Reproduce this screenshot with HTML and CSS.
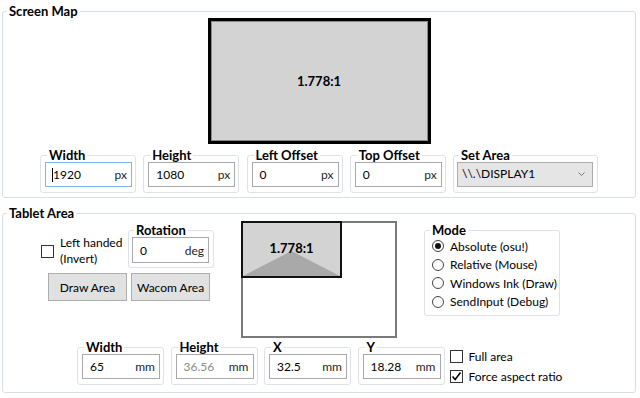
FILE: index.html
```html
<!DOCTYPE html>
<html lang="en">
<head>
    <meta charset="UTF-8">
    <meta name="viewport" content="width=device-width, initial-scale=1.0">
    <title>Area Settings</title>
    <link rel="stylesheet" href="styles.css">
</head>
<body>
    <fieldset class="group screen-group">
        <legend>Screen Map</legend>

        <div class="screen-view">1.778:1</div>

        <div class="field-row top-fields">
            <fieldset class="field">
                <legend>Width</legend>
                <div class="input focused"><span class="value"><span class="caret"></span>1920</span><span class="unit">px</span></div>
            </fieldset>
            <fieldset class="field">
                <legend>Height</legend>
                <div class="input"><span class="value">1080</span><span class="unit">px</span></div>
            </fieldset>
            <fieldset class="field">
                <legend>Left Offset</legend>
                <div class="input"><span class="value">0</span><span class="unit">px</span></div>
            </fieldset>
            <fieldset class="field">
                <legend>Top Offset</legend>
                <div class="input"><span class="value">0</span><span class="unit">px</span></div>
            </fieldset>
            <fieldset class="field set-area">
                <legend>Set Area</legend>
                <div class="select">
                    <span>\\.\DISPLAY1</span>
                    <svg width="7" height="5" viewBox="0 0 7 5"><polyline points="0.5,0.5 3.5,3.5 6.5,0.5" fill="none" stroke="#777" stroke-width="1"/></svg>
                </div>
            </fieldset>
        </div>
    </fieldset>

    <fieldset class="group tablet-group">
        <legend>Tablet Area</legend>

        <div class="tablet-top">
            <div class="left-block">
                <div class="left-row">
                    <label class="check handed">
                        <span class="box"></span>
                        <span>Left handed<br>(Invert)</span>
                    </label>
                    <fieldset class="field rotation">
                        <legend>Rotation</legend>
                        <div class="input"><span class="value">0</span><span class="unit">deg</span></div>
                    </fieldset>
                </div>
                <div class="buttons">
                    <button type="button">Draw Area</button>
                    <button type="button">Wacom Area</button>
                </div>
            </div>

            <svg class="tablet-view" width="156" height="117" viewBox="0 0 156 117">
                <rect x="1" y="1" width="154" height="115" fill="#fff" stroke="#7a7a7a" stroke-width="2"/>
                <rect x="1" y="1" width="99" height="55" fill="#d3d3d3" stroke="#111" stroke-width="2"/>
                <polygon points="2,55 99,55 50.5,30" fill="#a9a9a9"/>
                <text x="50.5" y="29" text-anchor="middle" class="ratio">1.778:1</text>
            </svg>

            <fieldset class="field mode">
                <legend>Mode</legend>
                <div class="radio checked"><span class="dot"></span>Absolute (osu!)</div>
                <div class="radio"><span class="dot"></span>Relative (Mouse)</div>
                <div class="radio"><span class="dot"></span>Windows Ink (Draw)</div>
                <div class="radio"><span class="dot"></span>SendInput (Debug)</div>
            </fieldset>
        </div>

        <div class="field-row bottom-fields">
            <fieldset class="field small">
                <legend>Width</legend>
                <div class="input"><span class="value">65</span><span class="unit">mm</span></div>
            </fieldset>
            <fieldset class="field small">
                <legend>Height</legend>
                <div class="input"><span class="value disabled">36.56</span><span class="unit">mm</span></div>
            </fieldset>
            <fieldset class="field small">
                <legend>X</legend>
                <div class="input"><span class="value">32.5</span><span class="unit">mm</span></div>
            </fieldset>
            <fieldset class="field small">
                <legend>Y</legend>
                <div class="input"><span class="value">18.28</span><span class="unit">mm</span></div>
            </fieldset>
            <div class="checks">
                <label class="check"><span class="box"></span>Full area</label>
                <label class="check"><span class="box"><svg width="11" height="11" viewBox="0 0 11 11"><path d="M1.5 5.5 L4.2 8.5 L9.5 1.5" fill="none" stroke="#000" stroke-width="1.6"/></svg></span>Force aspect ratio</label>
            </div>
        </div>
    </fieldset>
</body>
</html>
```

FILE: styles.css
```css
body {
    margin: 0;
    background-color: #fff;
    font-family: Lato, "Noto Sans", sans-serif;
    font-size: 12px;
    color: #000;
}

/* group boxes */
.group {
    margin: 4px 4px 0 2px;
    padding: 0;
    border: 1px solid #d8dfe4;
    border-radius: 3px;
    min-width: 0;
}

.group > legend {
    margin-left: 4px;
    padding: 0 2px;
    font-size: 13px;
    font-weight: bold;
    line-height: 14px;
}

.screen-group {
    padding-bottom: 4px;
}

.tablet-group {
    margin-top: 8px;
    padding-bottom: 6px;
}

.screen-view {
    width: 223px;
    height: 126px;
    margin: 0 auto;
    box-sizing: border-box;
    border: 3px solid #000;
    box-shadow: inset 0 0 0 1px #8a8a8a;
    background-color: #d3d3d3;
    display: flex;
    align-items: center;
    justify-content: center;
    font-size: 13px;
    font-weight: bold;
}

/* small boxes with an input */
.field-row {
    display: flex;
}

.top-fields {
    justify-content: center;
    gap: 7.25px;
    margin-top: 4px;
}

.field {
    margin: 0;
    padding: 0 3px 5px 4px;
    border: 1px solid #dde3e8;
    border-radius: 3px;
    min-width: 0;
    width: 96px;
    box-sizing: border-box;
}

.field legend {
    margin-left: 2px;
    padding: 0 2px;
    font-size: 13px;
    font-weight: bold;
    line-height: 14px;
}

.field.set-area {
    width: 145px;
    padding: 0 4px 5px 3px;
}

.input {
    height: 25px;
    box-sizing: border-box;
    border: 1px solid #a9a9a9;
    background-color: #fff;
    display: flex;
    align-items: center;
    justify-content: space-between;
    padding: 0 4px 0 7px;
}

.input.focused {
    border-color: #7eb4ea;
}

.value {
    display: flex;
    align-items: center;
}

.value.disabled {
    color: #8c8c8c;
}

.caret {
    display: inline-block;
    width: 1px;
    height: 14px;
    background-color: #000;
    margin-left: -1px;
}

.unit {
    color: #1e1e1e;
}

.select {
    height: 25px;
    box-sizing: border-box;
    border: 1px solid #acacac;
    background-color: #e5e5e5;
    display: flex;
    align-items: center;
    justify-content: space-between;
    padding: 0 7px 2px 4px;
}

.select svg {
    margin-top: 2px;
}

/* tablet area */
.tablet-top {
    display: flex;
    align-items: flex-start;
    padding-left: 38px;
}

.left-block {
    width: 173px;
    margin-top: 3px;
    margin-right: 27px;
}

.left-row {
    display: flex;
    align-items: flex-start;
}

.check {
    display: flex;
    align-items: center;
    gap: 6px;
    white-space: nowrap;
}

.check.handed {
    width: 87px;
    margin-top: 12px;
    line-height: 16px;
}

.box {
    width: 13px;
    height: 13px;
    box-sizing: border-box;
    border: 1px solid #333;
    background-color: #fff;
    display: flex;
    align-items: center;
    justify-content: center;
    flex-shrink: 0;
}

.field.rotation {
    width: 86px;
    padding: 0 4px 4px 3px;
}

.field.rotation .input {
    height: 26px;
}

.buttons {
    display: flex;
    gap: 4px;
    margin: 5px 0 0 7px;
}

.buttons button {
    width: 79px;
    height: 28px;
    background-color: #e1e1e1;
    border: 1px solid #adadad;
    font-family: inherit;
    font-size: 12px;
    color: #000;
    padding: 0;
}

.tablet-view {
    display: block;
    margin-top: 1px;
    margin-right: 27px;
}

.ratio {
    font-family: Lato, "Noto Sans", sans-serif;
    font-size: 13px;
    font-weight: bold;
    dominant-baseline: middle;
}

.field.mode {
    width: 136px;
    margin-top: 3px;
    padding: 0 2px 4px 7px;
}

.field.mode legend {
    margin-left: -2px;
}

.radio {
    display: flex;
    align-items: center;
    gap: 6px;
    height: 18.5px;
    white-space: nowrap;
}

.dot {
    width: 12px;
    height: 12px;
    box-sizing: border-box;
    border: 1px solid #444;
    border-radius: 50%;
    display: flex;
    align-items: center;
    justify-content: center;
    flex-shrink: 0;
}

.radio.checked .dot::after {
    content: "";
    width: 6px;
    height: 6px;
    border-radius: 50%;
    background-color: #111;
}

.bottom-fields {
    margin-top: 2px;
    padding-left: 74px;
    gap: 6.5px;
    align-items: flex-start;
}

.field.small {
    width: 87px;
}

.checks {
    margin-left: -1.5px;
    padding-top: 6px;
}

.checks .check {
    height: 20px;
}
```
